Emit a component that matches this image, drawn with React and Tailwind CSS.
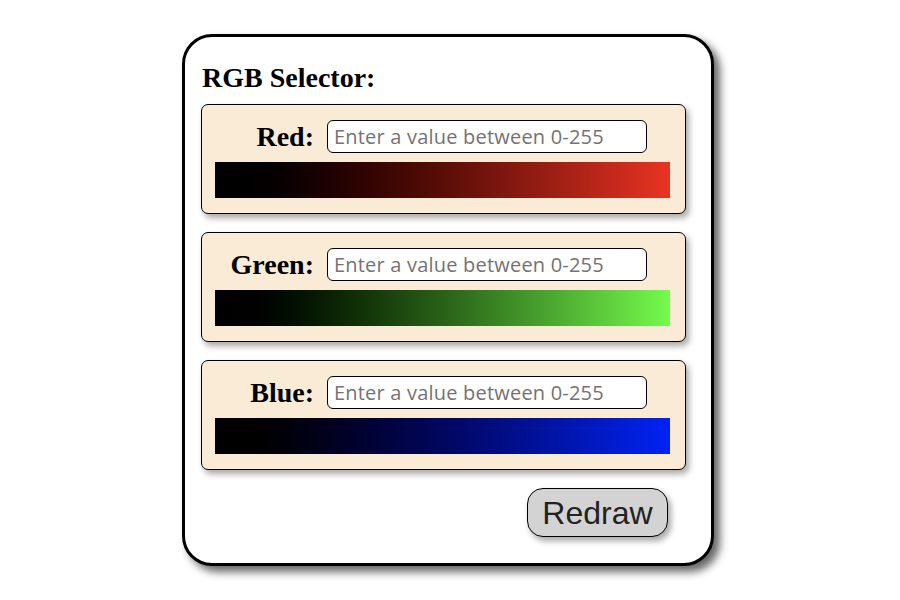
import React, { useState } from 'react';

const channels = [
    { name: 'Red', bar: 'bg-gradient-to-r from-black to-[#ea3323]' },
    { name: 'Green', bar: 'bg-gradient-to-r from-black to-[#75fb4c]' },
    { name: 'Blue', bar: 'bg-gradient-to-r from-black to-[#0023f5]' },
];

const serif = { fontFamily: '"Liberation Serif", "Times New Roman", serif' };

const ChannelPanel = ({ name, bar, value, onChange }) => (
    <div className="w-[485px] h-[110px] bg-[#faebd7] border-[1.5px] border-black rounded-[7px] shadow-[3px_4px_6px_rgba(0,0,0,0.35)] pt-[15px] px-[13px]">
        <div className="flex items-center">
            <label className="w-[99px] text-right text-[28px] font-bold text-black leading-none" style={serif}>
                {name}:
            </label>
            <input
                type="text"
                value={value}
                onChange={(e) => onChange(e.target.value)}
                placeholder="Enter a value between 0-255"
                className="ml-[13px] w-[320px] h-[33px] bg-white border-[1.5px] border-black rounded-[6px] px-[6px] text-[20px] tracking-[0.2px] text-black placeholder:text-[#737373] outline-none font-['Open_Sans',Arial,sans-serif]"
            />
        </div>
        <div className={`mt-[9px] w-[455px] h-[36px] ${bar}`}></div>
    </div>
);

export default function App() {
    const [values, setValues] = useState({ Red: '', Green: '', Blue: '' });

    return (
        <div className="w-[900px] h-[600px] bg-white flex justify-center pt-[34px]">
            <div className="w-[532px] h-[532px] ml-[-4px] border-[3px] border-black rounded-[30px] bg-white shadow-[6px_6px_8px_rgba(0,0,0,0.6)] pt-[25px] pl-[16px] flex flex-col">
                <h2 className="text-[28px] font-bold text-black leading-[32px] pl-[1px] mb-[10px]" style={serif}>
                    RGB Selector:
                </h2>
                <div className="flex flex-col gap-[18px]">
                    {channels.map((c) => (
                        <ChannelPanel
                            key={c.name}
                            name={c.name}
                            bar={c.bar}
                            value={values[c.name]}
                            onChange={(v) => setValues((prev) => ({ ...prev, [c.name]: v }))}
                        />
                    ))}
                </div>
                <div className="w-[485px] flex justify-end pr-[18px] mt-[18px]">
                    <button className="w-[141px] h-[49px] bg-[#d3d3d3] border-[1.5px] border-black rounded-[16px] shadow-[3px_4px_6px_rgba(0,0,0,0.35)] text-[32px] text-[#222] leading-none font-['Liberation_Sans',Arial,sans-serif]">
                        Redraw
                    </button>
                </div>
            </div>
        </div>
    );
}
